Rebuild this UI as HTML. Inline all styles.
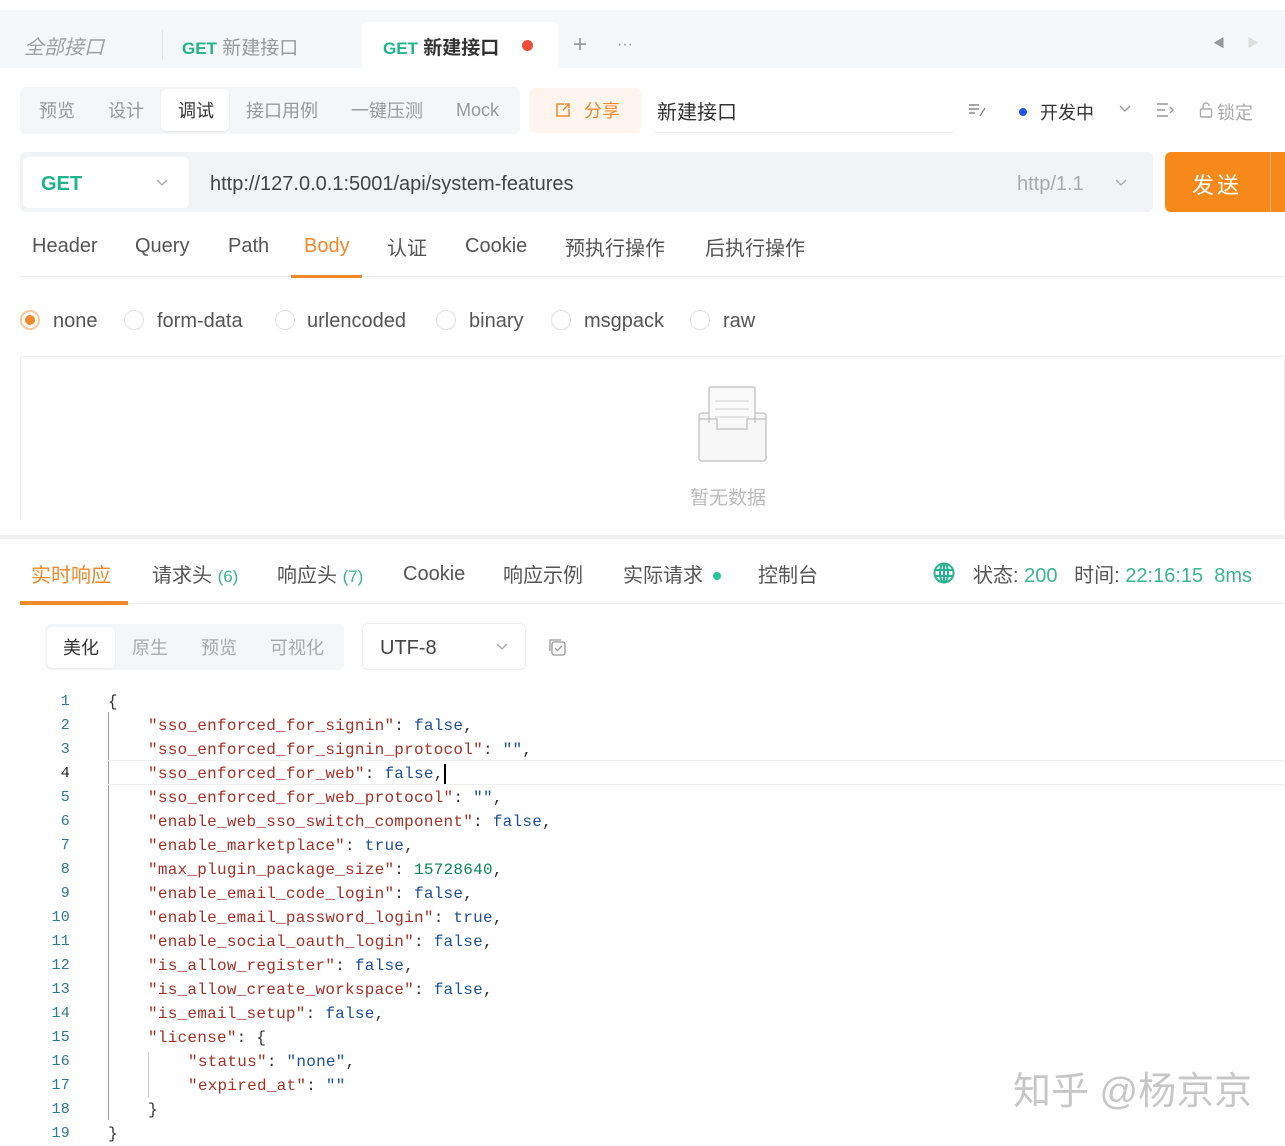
<!DOCTYPE html>
<html><head><meta charset="utf-8">
<style>
*{box-sizing:border-box;margin:0;padding:0}
body{width:1285px;height:1138px;overflow:hidden;background:#fff;font-family:"Liberation Sans","Noto Sans CJK SC",sans-serif;color:#333;position:relative}
.a{position:absolute;white-space:nowrap}
.g{color:#1fb58a;font-weight:bold}
.code{font-family:"Liberation Mono","Noto Sans CJK SC",monospace;font-size:16px;letter-spacing:0.25px}
.k{color:#a3312a}.b{color:#1f4f9a}.n{color:#098658}
.ln{position:absolute;left:30px;width:40px;text-align:right;color:#2b7a91;font-family:"Liberation Mono",monospace;font-size:15px}
.radio{position:absolute;width:20px;height:20px;border:1px solid #e0e0e0;border-radius:50%;top:310px}
</style></head><body>
<!-- top tab bar -->
<div class="a" style="left:0;top:10px;width:1285px;height:58px;background:#f6f7f9"></div>
<div class="a" style="left:24px;top:31px;font-size:20px;color:#a0a0a0;font-style:italic">全部接口</div>
<div class="a" style="left:162px;top:30px;width:1px;height:30px;background:#e6e6e6"></div>
<div class="a" style="left:182px;top:33px;font-size:19px;color:#999"><span class="g" style="font-size:17px">GET</span> 新建接口</div>
<div class="a" style="left:362px;top:22px;width:196px;height:46px;background:#fff;border-radius:6px 6px 0 0"></div>
<div class="a" style="left:383px;top:33px;font-size:19px;color:#333;font-weight:bold"><span class="g" style="font-size:17px">GET</span> 新建接口</div>
<div class="a" style="left:522px;top:40px;width:11px;height:11px;border-radius:50%;background:#ef4d3c"></div>
<div class="a" style="left:573px;top:31px;font-size:24px;color:#999">+</div>
<div class="a" style="left:617px;top:36px;font-size:16px;color:#999">···</div>
<div class="a" style="left:1213px;top:34px;font-size:12px;color:#999">◀</div>
<div class="a" style="left:1247px;top:34px;font-size:12px;color:#ddd">▶</div>
<!-- second row -->
<div class="a" style="left:20px;top:87px;width:500px;height:47px;background:#f5f6f8;border-radius:6px"></div>
<div class="a" style="left:161px;top:89px;width:68px;height:42px;background:#fff;border-radius:5px;box-shadow:0 1px 2px rgba(0,0,0,.06)"></div>
<div class="a" style="left:39px;top:97px;font-size:18px;color:#999">预览</div>
<div class="a" style="left:108px;top:97px;font-size:18px;color:#999">设计</div>
<div class="a" style="left:178px;top:97px;font-size:18px;color:#333">调试</div>
<div class="a" style="left:246px;top:97px;font-size:18px;color:#999">接口用例</div>
<div class="a" style="left:351px;top:97px;font-size:18px;color:#999">一键压测</div>
<div class="a" style="left:456px;top:100px;font-size:18px;color:#999">Mock</div>
<div class="a" style="left:529px;top:88px;width:112px;height:45px;background:#fef6ee;border-radius:6px"></div>
<svg class="a" style="left:555px;top:102px" width="16" height="16" viewBox="0 0 16 16" fill="none" stroke="#f0892a" stroke-width="1.5"><path d="M9 2 H2 V14 H14 V7"/><path d="M8 8 L14 2 M10 2 H14 V6"/></svg>
<div class="a" style="left:584px;top:97px;font-size:18px;color:#f0892a">分享</div>
<div class="a" style="left:657px;top:96px;font-size:20px;color:#333">新建接口</div>
<div class="a" style="left:655px;top:132px;width:298px;height:1px;background:#eee"></div>
<svg class="a" style="left:968px;top:102px" width="20" height="16" viewBox="0 0 20 16" fill="none" stroke="#888" stroke-width="1.4"><path d="M1 3 H11 M1 7 H11 M1 11 H7 M12 14 L17 6"/></svg>
<div class="a" style="left:1019px;top:108px;width:8px;height:8px;border-radius:50%;background:#2354e6"></div>
<div class="a" style="left:1040px;top:99px;font-size:18px;color:#333">开发中</div>
<svg class="a" style="left:1118px;top:104px" width="14" height="10" viewBox="0 0 14 10" fill="none" stroke="#999" stroke-width="1.4"><path d="M2 2 L7 7 L12 2"/></svg>
<svg class="a" style="left:1156px;top:102px" width="20" height="16" viewBox="0 0 20 16" fill="none" stroke="#999" stroke-width="1.4"><path d="M1 2 H12 M1 8 H9 M1 14 H12 M14 5 L17 8 L14 11"/></svg>
<svg class="a" style="left:1199px;top:102px" width="14" height="16" viewBox="0 0 14 16" fill="none" stroke="#aaa" stroke-width="1.4"><rect x="1.5" y="7" width="11" height="8" rx="1"/><path d="M4 7 V4 A3 3 0 0 1 10 4"/></svg>
<div class="a" style="left:1217px;top:99px;font-size:18px;color:#aaa">锁定</div>
<!-- URL bar -->
<div class="a" style="left:20px;top:152px;width:1133px;height:60px;background:#f2f3f5;border-radius:6px"></div>
<div class="a" style="left:23px;top:157px;width:166px;height:51px;background:#fff;border-radius:5px"></div>
<div class="a" style="left:41px;top:173px;font-size:20px" ><span class="g" style="font-weight:bold">GET</span></div>
<svg class="a" style="left:156px;top:179px" width="12" height="8" viewBox="0 0 12 8" fill="none" stroke="#aaa" stroke-width="1.3"><path d="M1 1 L6 6 L11 1"/></svg>
<div class="a" style="left:210px;top:173px;font-size:20px;color:#444">http://127.0.0.1:5001/api/system-features</div>
<div class="a" style="left:1017px;top:173px;font-size:20px;color:#aaa">http/1.1</div>
<svg class="a" style="left:1115px;top:179px" width="12" height="8" viewBox="0 0 12 8" fill="none" stroke="#aaa" stroke-width="1.3"><path d="M1 1 L6 6 L11 1"/></svg>
<div class="a" style="left:1165px;top:152px;width:125px;height:60px;background:#f7891b;border-radius:6px"></div>
<div class="a" style="left:1270px;top:152px;width:1px;height:60px;background:#fbb36e"></div>
<div class="a" style="left:1192px;top:168px;font-size:22px;color:#fff;letter-spacing:3px">发送</div>
<!-- request tabs -->
<div class="a" style="left:20px;top:276px;width:1265px;height:1px;background:#eee"></div>
<div class="a" style="top:235px;left:32px;font-size:20px;color:#555">Header</div>
<div class="a" style="top:235px;left:135px;font-size:20px;color:#555">Query</div>
<div class="a" style="top:235px;left:228px;font-size:20px;color:#555">Path</div>
<div class="a" style="top:235px;left:304px;font-size:20px;color:#f0892a">Body</div>
<div class="a" style="left:291px;top:275px;width:71px;height:3px;background:#f0892a"></div>
<div class="a" style="top:232px;left:387px;font-size:20px;color:#555">认证</div>
<div class="a" style="top:235px;left:465px;font-size:20px;color:#555">Cookie</div>
<div class="a" style="top:232px;left:565px;font-size:20px;color:#555">预执行操作</div>
<div class="a" style="top:232px;left:705px;font-size:20px;color:#555">后执行操作</div>
<!-- radios -->
<div class="radio" style="left:20px;border:2px solid #f7c899"><div style="position:absolute;left:3px;top:3px;width:10px;height:10px;border-radius:50%;background:#f0892a"></div></div>
<div class="a" style="left:53px;top:310px;font-size:20px;color:#555">none</div>
<div class="radio" style="left:124px"></div>
<div class="a" style="left:157px;top:310px;font-size:20px;color:#555">form-data</div>
<div class="radio" style="left:275px"></div>
<div class="a" style="left:307px;top:310px;font-size:20px;color:#555">urlencoded</div>
<div class="radio" style="left:436px"></div>
<div class="a" style="left:469px;top:310px;font-size:20px;color:#555">binary</div>
<div class="radio" style="left:551px"></div>
<div class="a" style="left:584px;top:310px;font-size:20px;color:#555">msgpack</div>
<div class="radio" style="left:690px"></div>
<div class="a" style="left:723px;top:310px;font-size:20px;color:#555">raw</div>
<!-- empty box -->
<div class="a" style="left:20px;top:356px;width:1265px;height:164px;border:1px solid #f0f0f0;border-bottom:none"></div>
<svg class="a" style="left:697px;top:385px" width="72" height="80" viewBox="0 0 72 80" fill="none" stroke="#c8c8c8" stroke-width="1.5">
<rect x="2" y="28" width="67" height="48" rx="3" fill="#f7f7f7"/>
<path d="M12 38 V4 Q12 2 14 2 H56 Q58 2 58 4 V38" fill="#fafafa"/>
<path d="M18 16 H52 M18 24 H52 M18 32 H52" stroke="#ddd"/>
<path d="M2 34 H20 V44 H50 V34 H69" />
</svg>
<div class="a" style="left:690px;top:483px;font-size:19px;color:#bbb">暂无数据</div>
<!-- divider -->
<div class="a" style="left:0;top:535px;width:1285px;height:4px;background:#f0f0f0"></div>
<!-- response tabs -->
<div class="a" style="left:20px;top:603px;width:1265px;height:1px;background:#f0f0f0"></div>
<div class="a" style="left:31px;top:559px;font-size:20px;color:#f0892a">实时响应</div>
<div class="a" style="left:20px;top:601px;width:108px;height:4px;background:#f0892a"></div>
<div class="a" style="left:152px;top:559px;font-size:20px;color:#555">请求头 <span style="color:#38b48b;font-size:17px">(6)</span></div>
<div class="a" style="left:277px;top:559px;font-size:20px;color:#555">响应头 <span style="color:#38b48b;font-size:17px">(7)</span></div>
<div class="a" style="left:403px;top:563px;font-size:20px;color:#555">Cookie</div>
<div class="a" style="left:503px;top:559px;font-size:20px;color:#555">响应示例</div>
<div class="a" style="left:623px;top:559px;font-size:20px;color:#555">实际请求</div>
<div class="a" style="left:713px;top:572px;width:8px;height:8px;border-radius:50%;background:#26c49a"></div>
<div class="a" style="left:758px;top:559px;font-size:20px;color:#555">控制台</div>
<svg class="a" style="left:933px;top:562px" width="22" height="22" viewBox="0 0 22 22" fill="none" stroke="#26b48e" stroke-width="2"><circle cx="11" cy="11" r="9.5"/><ellipse cx="11" cy="11" rx="4" ry="9.5"/><path d="M2 8 H20 M2 14 H20 M11 1.5 V20.5"/></svg>
<div class="a" style="left:973px;top:559px;font-size:20px;color:#555">状态: <span style="color:#3bb58e">200</span>&nbsp;&nbsp; 时间: <span style="color:#3bb58e">22:16:15&nbsp; 8ms</span></div>
<!-- response tools -->
<div class="a" style="left:45px;top:624px;width:299px;height:46px;background:#f5f6f8;border-radius:6px"></div>
<div class="a" style="left:47px;top:627px;width:68px;height:41px;background:#fff;border-radius:5px;box-shadow:0 1px 2px rgba(0,0,0,.06)"></div>
<div class="a" style="left:63px;top:634px;font-size:18px;color:#333">美化</div>
<div class="a" style="left:132px;top:634px;font-size:18px;color:#aaa">原生</div>
<div class="a" style="left:201px;top:634px;font-size:18px;color:#aaa">预览</div>
<div class="a" style="left:270px;top:634px;font-size:18px;color:#aaa">可视化</div>
<div class="a" style="left:362px;top:623px;width:164px;height:47px;border:1px solid #eee;border-radius:6px"></div>
<div class="a" style="left:380px;top:637px;font-size:20px;color:#444">UTF-8</div>
<svg class="a" style="left:496px;top:643px" width="12" height="8" viewBox="0 0 12 8" fill="none" stroke="#aaa" stroke-width="1.3"><path d="M1 1 L6 6 L11 1"/></svg>
<svg class="a" style="left:547px;top:637px" width="20" height="20" viewBox="0 0 20 20" fill="none" stroke="#999" stroke-width="1.3"><rect x="5" y="5" width="13" height="13" rx="2"/><path d="M3 14 V3 H14"/><path d="M8 11 L10.5 13.5 L15 9"/></svg>
<!-- code -->
<div class="a" style="left:108px;top:712px;width:1px;height:408px;background:#999"></div>
<div class="a" style="left:148px;top:1052px;width:1px;height:46px;background:#ccc"></div>
<div class="a" style="left:108px;top:760px;width:1177px;height:25px;border-top:1px solid #eee;border-bottom:1px solid #eee"></div>
<div class="a code" style="left:0;top:690px;line-height:24px">
<div style="position:relative;height:24px"><span class="ln">1</span><span style="position:absolute;left:108px">{</span></div>
<div style="position:relative;height:24px"><span class="ln">2</span><span style="position:absolute;left:148px"><span class="k">"sso_enforced_for_signin"</span>: <span class="b">false</span>,</span></div>
<div style="position:relative;height:24px"><span class="ln">3</span><span style="position:absolute;left:148px"><span class="k">"sso_enforced_for_signin_protocol"</span>: <span class="b">""</span>,</span></div>
<div style="position:relative;height:24px"><span class="ln" style="color:#222">4</span><span style="position:absolute;left:148px"><span class="k">"sso_enforced_for_web"</span>: <span class="b">false</span>,<span style="display:inline-block;width:2px;height:20px;background:#000;vertical-align:middle"></span></span></div>
<div style="position:relative;height:24px"><span class="ln">5</span><span style="position:absolute;left:148px"><span class="k">"sso_enforced_for_web_protocol"</span>: <span class="b">""</span>,</span></div>
<div style="position:relative;height:24px"><span class="ln">6</span><span style="position:absolute;left:148px"><span class="k">"enable_web_sso_switch_component"</span>: <span class="b">false</span>,</span></div>
<div style="position:relative;height:24px"><span class="ln">7</span><span style="position:absolute;left:148px"><span class="k">"enable_marketplace"</span>: <span class="b">true</span>,</span></div>
<div style="position:relative;height:24px"><span class="ln">8</span><span style="position:absolute;left:148px"><span class="k">"max_plugin_package_size"</span>: <span class="n">15728640</span>,</span></div>
<div style="position:relative;height:24px"><span class="ln">9</span><span style="position:absolute;left:148px"><span class="k">"enable_email_code_login"</span>: <span class="b">false</span>,</span></div>
<div style="position:relative;height:24px"><span class="ln">10</span><span style="position:absolute;left:148px"><span class="k">"enable_email_password_login"</span>: <span class="b">true</span>,</span></div>
<div style="position:relative;height:24px"><span class="ln">11</span><span style="position:absolute;left:148px"><span class="k">"enable_social_oauth_login"</span>: <span class="b">false</span>,</span></div>
<div style="position:relative;height:24px"><span class="ln">12</span><span style="position:absolute;left:148px"><span class="k">"is_allow_register"</span>: <span class="b">false</span>,</span></div>
<div style="position:relative;height:24px"><span class="ln">13</span><span style="position:absolute;left:148px"><span class="k">"is_allow_create_workspace"</span>: <span class="b">false</span>,</span></div>
<div style="position:relative;height:24px"><span class="ln">14</span><span style="position:absolute;left:148px"><span class="k">"is_email_setup"</span>: <span class="b">false</span>,</span></div>
<div style="position:relative;height:24px"><span class="ln">15</span><span style="position:absolute;left:148px"><span class="k">"license"</span>: {</span></div>
<div style="position:relative;height:24px"><span class="ln">16</span><span style="position:absolute;left:188px"><span class="k">"status"</span>: <span class="b">"none"</span>,</span></div>
<div style="position:relative;height:24px"><span class="ln">17</span><span style="position:absolute;left:188px"><span class="k">"expired_at"</span>: <span class="b">""</span></span></div>
<div style="position:relative;height:24px"><span class="ln">18</span><span style="position:absolute;left:148px">}</span></div>
<div style="position:relative;height:24px"><span class="ln">19</span><span style="position:absolute;left:108px">}</span></div>
</div>
<div class="a" style="left:1013px;top:1060px;font-size:38px;color:rgba(180,180,180,.75)">知乎 @杨京京</div>
</body></html>
